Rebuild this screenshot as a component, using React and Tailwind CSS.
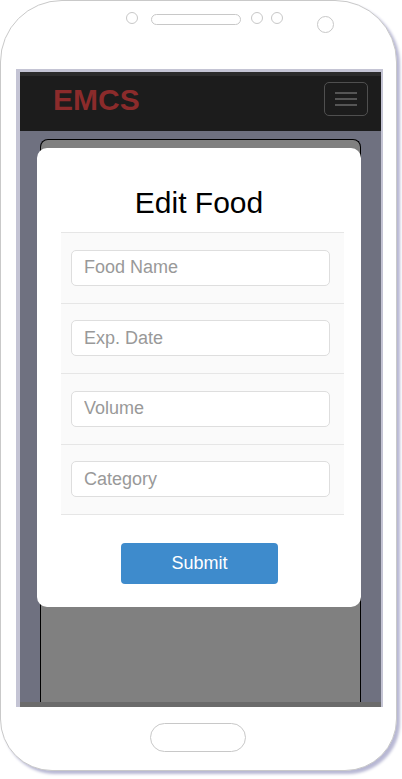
export default function App() {
  const font = "font-['Liberation_Sans',Arial,sans-serif]";
  const fields = ["Food Name", "Exp. Date", "Volume", "Category"];
  return (
    <div className={`w-[402px] h-[779px] bg-white ${font}`}>
      <div className="w-[397px] h-[771px] border border-[#c9c9c9] rounded-t-[62px] rounded-b-[52px] bg-white shadow-[3px_3px_3px_#b8b8d4] flex flex-col">
        {/* hardware row */}
        <div className="h-[68px] flex items-start pl-[125px] pt-[11px]">
          <div className="w-[12px] h-[12px] rounded-full border border-[#c8c8c8]" />
          <div className="ml-[13px] mt-[2px] w-[90px] h-[11px] rounded-full border border-[#c8c8c8]" />
          <div className="ml-[10px] w-[12px] h-[12px] rounded-full border border-[#c8c8c8]" />
          <div className="ml-[8px] w-[12px] h-[12px] rounded-full border border-[#c8c8c8]" />
          <div className="ml-[34px] mt-[4px] w-[17px] h-[17px] rounded-full border border-[#c8c8c8]" />
        </div>
        {/* screen */}
        <div className="ml-[15px] w-[367px] h-[638px] border-l-4 border-t-[3px] border-r-[2px] border-[#c4c4d4] flex flex-col">
          <div className="h-[4px] bg-[#2b2b2b]" />
          <div className="h-[55px] bg-[#1c1c1c] flex justify-between items-start pl-[33px] pr-[13px] pt-[6px]">
            <span className="mt-[1px] text-[30px] leading-[34px] font-bold text-[#8b2b2b]">EMCS</span>
            <button className="w-[44px] h-[34px] border border-[#4f4f4f] rounded-[5px] flex flex-col items-center justify-center gap-[4px]">
              <span className="block w-[22px] h-[2px] bg-[#555]" />
              <span className="block w-[22px] h-[2px] bg-[#555]" />
              <span className="block w-[22px] h-[2px] bg-[#555]" />
            </button>
          </div>
          <div className="flex-1 bg-[#6f7180] pt-[8px] px-[20px] flex flex-col">
            <div className="relative flex-1 bg-[#808080] border border-b-0 border-black rounded-t-[8px]">
              <div className="absolute left-[-4px] top-[8px] w-[324px] h-[459px] bg-white rounded-[10px] flex flex-col">
                <h2 className="pt-[38px] text-[30px] leading-[33px] text-center text-black">Edit Food</h2>
                <div className="mt-[13px] ml-[24px] w-[283px] border-b border-[#e6e6e6]">
                  {fields.map((f) => (
                    <div key={f} className="h-[70.5px] border-t border-[#e6e6e6] bg-[#fafafa] flex items-center pl-[10px]">
                      <input
                        placeholder={f}
                        className="w-[259px] h-[36px] bg-white border border-[#dedede] rounded-[5px] pl-[12px] text-[18px] text-[#333] placeholder:text-[#999] outline-none"
                      />
                    </div>
                  ))}
                </div>
                <button className="mt-[28px] ml-[84px] w-[157px] h-[41px] bg-[#3e8bcc] rounded-[4px] text-white text-[18px]">
                  Submit
                </button>
              </div>
            </div>
          </div>
          <div className="h-[5px] bg-[#6b6b6b]" />
        </div>
        {/* home button */}
        <div className="mt-[16px] ml-[149px] w-[96px] h-[29px] rounded-[15px] border border-[#c8c8c8]" />
      </div>
    </div>
  );
}
